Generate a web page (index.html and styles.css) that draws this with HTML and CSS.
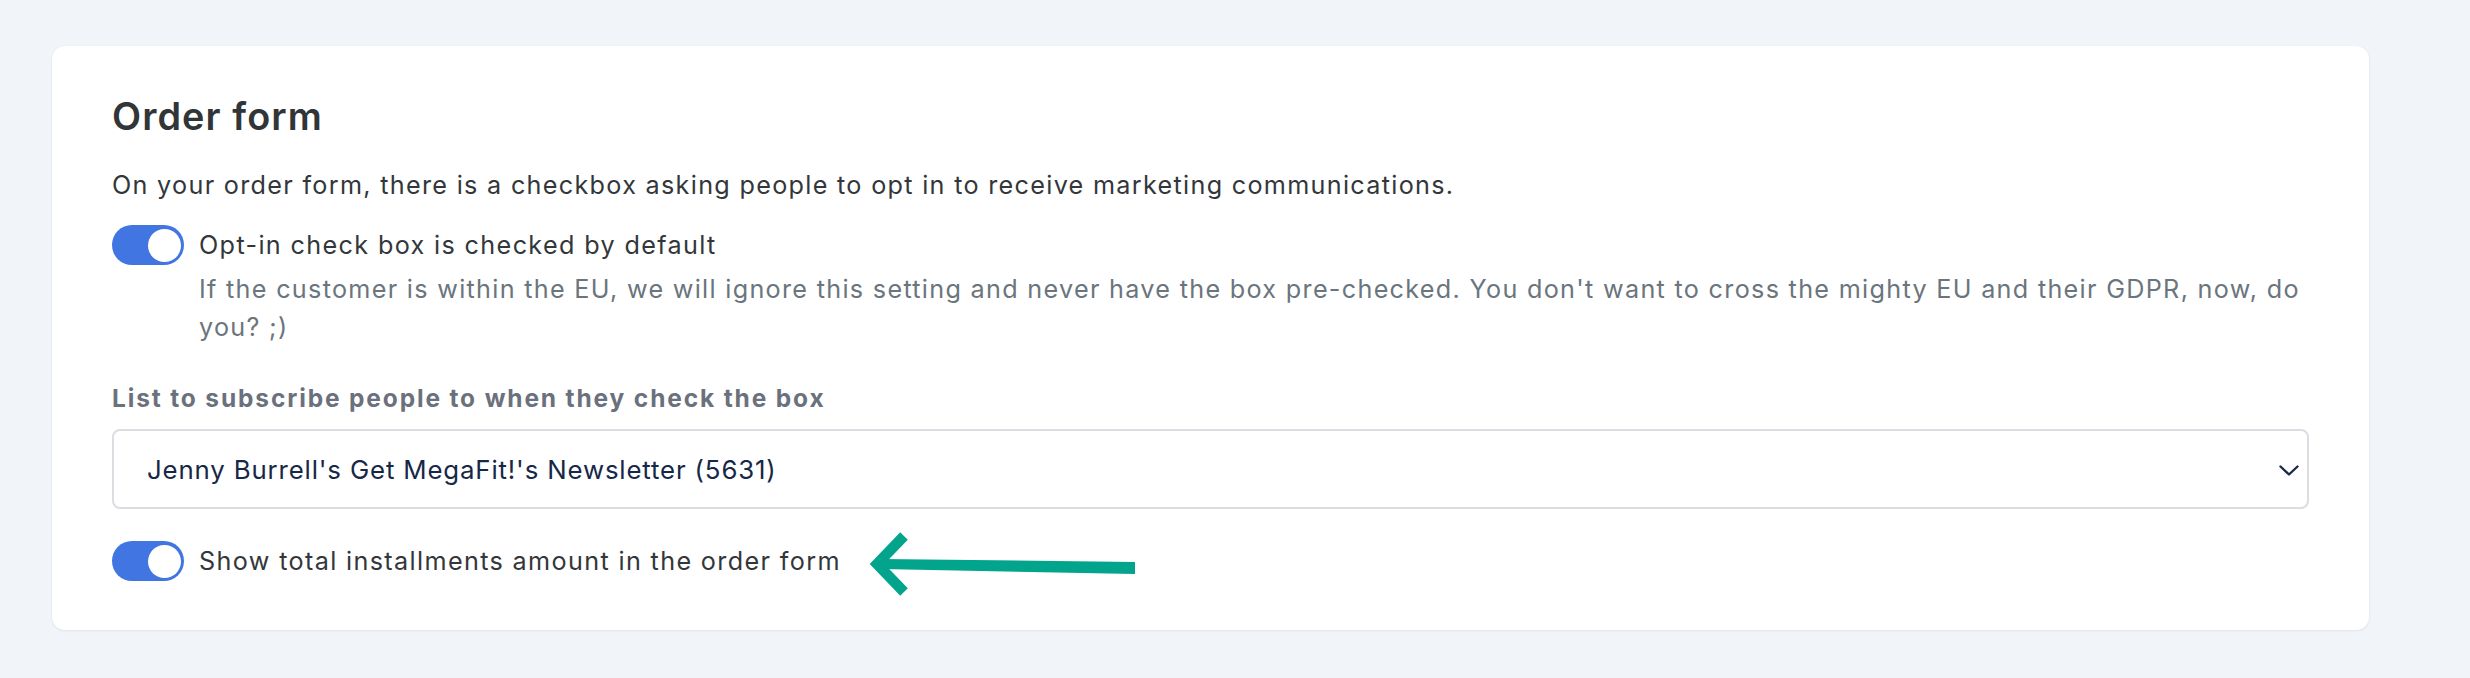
FILE: index.html
```html
<!DOCTYPE html>
<html lang="en">
<head>
<meta charset="utf-8">
<title>Order form</title>
<link rel="stylesheet" href="styles.css">
</head>
<body>
<main class="page">
  <section class="card">
    <h2 class="card-title">Order form</h2>
    <p class="intro">On your order form, there is a checkbox asking people to opt in to receive marketing communications.</p>

    <div class="setting">
      <div class="switch-row">
        <span class="switch is-on" role="switch" aria-checked="true"><span class="knob"></span></span>
        <span class="switch-label">Opt-in check box is checked by default</span>
      </div>
      <p class="help">If the customer is within the EU, we will ignore this setting and never have the box pre-checked. You don't want to cross the mighty EU and their GDPR, now, do you? ;)</p>
    </div>

    <div class="field">
      <label class="field-label">List to subscribe people to when they check the box</label>
      <div class="select">
        <span class="select-value">Jenny Burrell's Get MegaFit!'s Newsletter (5631)</span>
        <svg class="chevron" viewBox="0 0 20 11" width="20" height="11" aria-hidden="true">
          <polyline points="1.5,1.5 10,9.5 18.5,1.5" fill="none" stroke="#1b2a4a" stroke-width="2.4" stroke-linecap="round" stroke-linejoin="round"/>
        </svg>
      </div>
    </div>

    <div class="switch-row last">
      <span class="switch is-on" role="switch" aria-checked="true"><span class="knob"></span></span>
      <span class="switch-label">Show total installments amount in the order form</span>
      <svg class="annot-arrow" viewBox="0 0 268 66" width="268" height="66" aria-hidden="true">
        <polygon points="12,28 266,31 266,43 12,38" fill="#03a48c"/>
        <polyline points="35,5 8,33 35,61" fill="none" stroke="#03a48c" stroke-width="10.5" stroke-linejoin="miter" stroke-miterlimit="10"/>
      </svg>
    </div>
  </section>
</main>
</body>
</html>
```

FILE: styles.css
```css
* { box-sizing: border-box; }

html, body {
  margin: 0;
  padding: 0;
  background: #f1f4f8;
}

body {
  font-family: Inter, "Noto Sans", "Liberation Sans", sans-serif;
  color: #33373b;
  width: 2470px;
  height: 678px;
  overflow: hidden;
}

.page {
  padding: 46px 101px 0 52px;
}

.card {
  background: #ffffff;
  border-radius: 13px;
  box-shadow: 0 1px 3px rgba(30, 45, 70, 0.07), 0 0 1px rgba(30, 45, 70, 0.06);
  padding: 48px 60px 50px 60px;
  height: 584px;
}

.card-title {
  margin: 0;
  font-size: 37.8px;
  line-height: 45.4px;
  font-weight: 600;
  letter-spacing: 1.1px;
  color: #313538;
}

.intro {
  margin: 28px 0 0 0;
  font-size: 25.2px;
  line-height: 37.8px;
  letter-spacing: 1.3px;
  color: #33373b;
}

.setting {
  margin-top: 20px;
}

.switch-row {
  display: flex;
  align-items: center;
  gap: 15px;
  min-height: 40px;
}

.switch {
  flex: none;
  width: 72px;
  height: 40px;
  border-radius: 20px;
  background: #4075e2;
  display: flex;
  align-items: center;
  justify-content: flex-end;
  padding: 0 3.5px;
}

.knob {
  width: 33px;
  height: 33px;
  border-radius: 50%;
  background: #ffffff;
}

.switch-label {
  font-size: 25.2px;
  line-height: 40px;
  letter-spacing: 1.35px;
  color: #33373b;
}

.help {
  margin: 6px 0 0 87px;
  font-size: 25.2px;
  line-height: 37.8px;
  letter-spacing: 1.3px;
  color: #6b757d;
}

.field {
  margin-top: 34px;
}

.field-label {
  display: block;
  font-size: 24.5px;
  line-height: 35.4px;
  font-weight: 700;
  letter-spacing: 1.85px;
  color: #6b717c;
}

.select {
  margin-top: 13px;
  height: 80px;
  border: 2px solid #dcdde2;
  border-radius: 8px;
  display: flex;
  align-items: center;
  justify-content: space-between;
  padding: 0 8px 0 33px;
}

.select-value {
  font-size: 25.8px;
  letter-spacing: 0.85px;
  color: #172748;
}

.chevron {
  flex: none;
  margin-top: 2px;
}

.switch-row.last {
  margin-top: 32px;
}

.annot-arrow {
  flex: none;
  margin: -10px 0 -16px 13px;
}
```
